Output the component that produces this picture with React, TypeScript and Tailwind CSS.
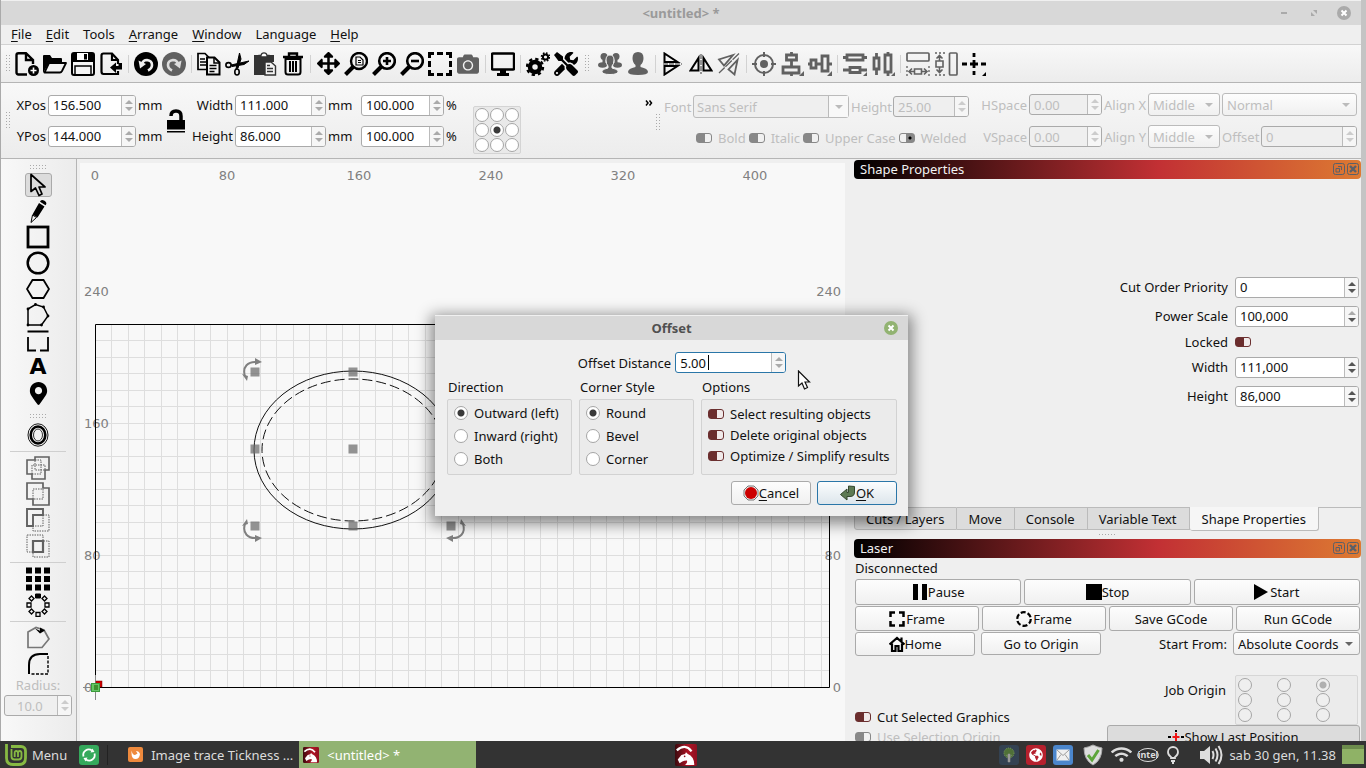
import type { ReactNode } from "react";
import clsx from "clsx";
import { FaArrowsAlt, FaCamera, FaGlobeAmericas, FaMapMarkerAlt, FaTools, FaWifi } from "react-icons/fa";

type ToolItem = { label: string; icon: ReactNode } | "separator" | "handle";

function Svg({ children, size = 24, color = "#000" }: { children: ReactNode; size?: number; color?: string }) {
  return (
    <svg width={size} height={size} viewBox="0 0 24 24" fill="none" stroke={color} strokeWidth={2} aria-hidden="true" className="shrink-0">
      {children}
    </svg>
  );
}

const GREY = "#616161";

const fileTools: ToolItem[] = [
  {
    label: "New",
    icon: (
      <Svg>
        <path d="M12 22.500H3.500Q1.500 22.500 1.500 20.500V3Q1.500 1.200 3.500 1.200H11L18 8v4M11 1v7h7" strokeWidth={2.400} />
        <circle cx="18.500" cy="18.500" r="5.500" fill="#000" stroke="none" />
        <path d="M18.500 15.500v6M15.500 18.500h6" stroke="#fff" strokeWidth={1.600} />
      </Svg>
    ),
  },
  {
    label: "Open",
    icon: (
      <Svg>
        <path d="M0 21V4q0-1 1-1h6l2 3h9q1 0 1 1v4H6z" fill="#000" stroke="none" />
        <path d="M1.500 20.500L6 11h17l-4 8q-.8 1.500-2 1.500z" fill="#f3f3f3" strokeWidth={1.800} strokeLinejoin="round" />
      </Svg>
    ),
  },
  {
    label: "Save",
    icon: (
      <Svg>
        <rect x="1" y="1" width="22" height="22" rx="2" fill="#f5f5f5" />
        <path d="M1 1h21v9H1z" fill="#000" stroke="none" />
        <path d="M6 1h11v7H6z" fill="#fff" stroke="none" />
        <path d="M14.500 2v5.500" strokeWidth={3} />
        <path d="M4 23v-9h16v9" strokeWidth={1.500} />
      </Svg>
    ),
  },
  {
    label: "Import",
    icon: (
      <Svg>
        <path d="M19 12V8l-6-6.500H4.500Q2.500 1.500 2.500 3.500v16q0 2.500 2 2.500H19v-3M13 2v6h6" strokeWidth={2.200} />
        <path d="M11 15.500l6-5V14h2.500v-3h3.500v6.500h-6v3.500z" fill="#000" stroke="none" />
      </Svg>
    ),
  },
  "separator",
  {
    label: "Undo",
    icon: (
      <Svg>
        <circle cx="12" cy="12" r="12" fill="#000" stroke="none" />
        <path d="M8 12q1-4 5-4 5 .5 5 5 0 3.500-4 5.500" stroke="#eee" strokeWidth={2.600} />
        <path d="M4.500 8.500L12 12l-6 4.500z" fill="#eee" stroke="none" />
      </Svg>
    ),
  },
  {
    label: "Redo",
    icon: (
      <Svg>
        <circle cx="12" cy="12" r="12" fill={GREY} stroke="none" />
        <path d="M16 12q-1-4-5-4-5 .5-5 5 0 3.500 4 5.500" stroke="#ddd" strokeWidth={2.600} />
        <path d="M19.500 8.500L12 12l6 4.500z" fill="#ddd" stroke="none" />
      </Svg>
    ),
  },
  "separator",
  {
    label: "Copy",
    icon: (
      <Svg>
        <path d="M1 1.500h7l4 4v12H1zM3 7h5M3 10h6M3 13h6" strokeWidth={1.700} />
        <path d="M10 5.500h7.500l5 5v12H10z" fill="#f3f3f3" />
        <path d="M17 6v5h5M12.500 13.500h7M12.500 16.500h7M12.500 19.500h5" strokeWidth={1.500} />
      </Svg>
    ),
  },
  {
    label: "Cut",
    icon: (
      <Svg>
        <ellipse cx="3.500" cy="13" rx="2.600" ry="2.400" strokeWidth={1.600} />
        <ellipse cx="12" cy="20" rx="2.200" ry="3" strokeWidth={1.600} />
        <path d="M11 17L14.500 1l1.500 6-3 9zM6 13l18-4-5 3.500-12 2z" fill="#000" strokeWidth={1} />
      </Svg>
    ),
  },
  {
    label: "Paste",
    icon: (
      <Svg color="#333">
        <path d="M1 3h20v7h-9v13H1z" fill="#333" stroke="none" />
        <path d="M6 5V3.500h2Q8.500.8 11 .8t3 2.700h2V5z" fill="#fff" strokeWidth={1.300} />
        <path d="M12 10h6l4.500 4v9H12z" fill="#f3f3f3" strokeWidth={1.400} />
        <path d="M14 13.500h3M14 16.500h6M14 19.500h6" strokeWidth={1.400} />
      </Svg>
    ),
  },
  {
    label: "Delete",
    icon: (
      <Svg>
        <path d="M2 5h20M8 4V1.500h8V4" strokeWidth={2.400} />
        <path d="M4.500 7v13q0 2.500 2.500 2.500h10q2.500 0 2.500-2.500V7zM9 9v11M12 9v11M15 9v11" />
      </Svg>
    ),
  },
  "separator",
  { label: "Pan", icon: <FaArrowsAlt size={23} /> },
  {
    label: "Zoom to page",
    icon: (
      <Svg>
        <circle cx="15" cy="9" r="8" strokeWidth={2.400} />
        <path d="M9 15L1.500 22.500" strokeWidth={4} />
        <path d="M12 5h4l3 3v5h-7zM14 8.500h3M14 10.500h3" strokeWidth={1.200} />
      </Svg>
    ),
  },
  {
    label: "Zoom in",
    icon: (
      <Svg>
        <circle cx="15" cy="9" r="7.800" strokeWidth={2.600} />
        <path d="M9 15L1.500 22.500" strokeWidth={4} />
        <path d="M15 5v8M11 9h8" strokeWidth={2.600} />
      </Svg>
    ),
  },
  {
    label: "Zoom out",
    icon: (
      <Svg>
        <circle cx="15" cy="9" r="7.800" strokeWidth={2.600} />
        <path d="M9 15L1.500 22.500" strokeWidth={4} />
        <path d="M11 9h8" strokeWidth={2.600} />
      </Svg>
    ),
  },
  {
    label: "Frame selection",
    icon: (
      <Svg>
        <path d="M1.500 6V1.500H6M9 1.500h6M18 1.500h4.500V6M22.500 9v6M22.500 18v4.500H18M15 22.500H9M6 22.500H1.500V18M1.500 15V9" strokeWidth={3} />
      </Svg>
    ),
  },
  { label: "Camera", icon: <FaCamera size={22} color={GREY} /> },
  "separator",
  {
    label: "Preview",
    icon: (
      <Svg>
        <rect x="1" y="1.500" width="22" height="16" rx="1" strokeWidth={2.400} />
        <path d="M9 18h6v3h3v3H6v-3h3z" fill="#000" stroke="none" />
      </Svg>
    ),
  },
  "separator",
  {
    label: "Settings",
    icon: (
      <Svg>
        <circle cx="9" cy="15" r="5" strokeWidth={4.500} />
        <circle cx="9" cy="15" r="8" strokeWidth={2.400} strokeDasharray="3.280 3" />
        <circle cx="19.500" cy="5" r="2.600" strokeWidth={2} />
        <circle cx="19.500" cy="5" r="4" strokeWidth={1.600} strokeDasharray="1.640 1.500" />
      </Svg>
    ),
  },
  { label: "Device settings", icon: <FaTools size={24} /> },
  "handle",
  {
    label: "Group",
    icon: (
      <Svg color={GREY}>
        <g fill={GREY} stroke="none">
          <circle cx="6" cy="4.500" r="3.500" />
          <circle cx="18" cy="4.500" r="3.500" />
          <ellipse cx="4.500" cy="13" rx="4.500" ry="2.800" />
          <ellipse cx="19.500" cy="13" rx="4.500" ry="2.800" />
          <path d="M4.500 6h3v6h-3zM16.500 6h3v6h-3z" />
        </g>
        <path d="M12 3q-4 0-4 5 0 4 2 6v2q-6 1-6 3.500 0 3 8 3t8-3q0-2.500-6-3.500v-2q2-2 2-6 0-5-4-5z" fill={GREY} stroke="#f3f3f3" strokeWidth={1} />
      </Svg>
    ),
  },
  {
    label: "Ungroup",
    icon: (
      <Svg>
        <path d="M12 0q-5.500 0-5.500 6 0 4.500 3 7v2Q2 16.500 2 20q0 3 10 3t10-3q0-3.500-7.500-5v-2q3-2.500 3-7 0-6-5.500-6z" fill={GREY} stroke="none" />
      </Svg>
    ),
  },
  "separator",
  {
    label: "Flip vertical",
    icon: (
      <Svg>
        <path d="M3.500 1.500v8.500h13zM3.500 22.500V14h13z" />
        <path d="M2 12h19" stroke="#777" strokeWidth={1.500} strokeDasharray="5 1" />
      </Svg>
    ),
  },
  {
    label: "Flip horizontal",
    icon: (
      <Svg>
        <path d="M9.500 6v12.500H1.500zM14.500 6v12.500h8z" />
        <path d="M12 2v20" stroke="#777" strokeWidth={1.500} strokeDasharray="5 1" />
      </Svg>
    ),
  },
  {
    label: "Mirror across line",
    icon: (
      <Svg color={GREY}>
        <path d="M16 3L2 7.500l5 6zM20.500 8l-3 14.500-6-5z" strokeWidth={1.800} />
        <path d="M22 1.500L2 21" strokeWidth={1.300} strokeDasharray="9 1" />
      </Svg>
    ),
  },
  "separator",
  {
    label: "Move to center",
    icon: (
      <Svg color={GREY}>
        <circle cx="12" cy="12" r="9" />
        <circle cx="12" cy="12" r="4" fill={GREY} stroke="none" />
        <path d="M12 0v5M12 19v5M0 12h5M19 12h5" />
      </Svg>
    ),
  },
  {
    label: "Align vertical centers",
    icon: (
      <Svg color={GREY}>
        <path d="M6.500 3h10v5h-10zM3 15h16v6H3zM11.500 0v3M11.500 8v7M11.500 21v3" strokeWidth={2.800} />
        <path d="M24 19v5h-5z" fill={GREY} stroke="none" />
      </Svg>
    ),
  },
  {
    label: "Align horizontal centers",
    icon: (
      <Svg color={GREY}>
        <path d="M3 8h5v8H3zM14 4h6v15h-6zM0 12h3M8 12h6M20 12h4" strokeWidth={2.800} />
        <path d="M24 19v5h-5z" fill={GREY} stroke="none" />
      </Svg>
    ),
  },
  "separator",
  {
    label: "Distribute vertically",
    icon: (
      <Svg color={GREY}>
        <path d="M4 3h16v5H4zM7 15.500h10v5H7zM0 5.500h4M20 5.500h4M0 18h7M17 18h7" strokeWidth={2.800} />
        <path d="M24 20v4h-4z" fill={GREY} stroke="none" />
      </Svg>
    ),
  },
  {
    label: "Distribute horizontally",
    icon: (
      <Svg color={GREY}>
        <path d="M3 6h5v11H3zM14 3h6v17h-6zM5.500 1v5M5.500 17v6M17 0v3M17 20v4" strokeWidth={2.800} />
        <path d="M24 20v4h-4z" fill={GREY} stroke="none" />
      </Svg>
    ),
  },
  "separator",
  {
    label: "Space horizontally",
    icon: (
      <Svg color={GREY}>
        <rect x="1" y="1" width="22" height="8" rx="1" strokeWidth={1.700} />
        <path d="M8.500 17h7v5h-7zM3.500 19.500h5M15.500 19.500h5M6 16.500l-3 3 3 3M18 16.500l3 3-3 3" strokeWidth={1.600} />
        <path d="M1 14v10M23 14v10" strokeWidth={1.300} strokeDasharray="2 2" />
      </Svg>
    ),
  },
  {
    label: "Space vertically",
    icon: (
      <Svg color={GREY}>
        <rect x="15.500" y="1" width="7.500" height="22" rx="1" strokeWidth={1.700} />
        <path d="M2 9h7v6H2zM5.500 9V4M5.500 15v5M2.500 6.500l3-3 3 3M2.500 17.500l3 3 3-3" strokeWidth={1.600} />
        <path d="M1 1h10M1 23h10" strokeWidth={1.300} strokeDasharray="2 2" />
      </Svg>
    ),
  },
  {
    label: "Set position",
    icon: (
      <Svg>
        <path d="M0 12h5M8 12h8M19 12h5M12 1v4M12 8v8M12 19v4" strokeWidth={2.800} />
        <path d="M24 20v4h-4z" fill="#000" stroke="none" />
      </Svg>
    ),
  },
];

const drawTools: ToolItem[] = [
  {
    label: "Select",
    icon: (
      <Svg>
        <path d="M5 1.500v17l4.500-3.500 3.500 7.500 3-1.500-3-7h6z" strokeWidth={1.700} strokeLinejoin="round" />
      </Svg>
    ),
  },
  {
    label: "Draw lines",
    icon: (
      <Svg>
        <path d="M13 4l5.500 3.500-7 11-5-3zM14 2.800q1-3 4.500-1 3.200 1.800 1 4.500z" fill="#000" stroke="none" />
        <path d="M6.500 16l4 2.500-5.500 5z" strokeWidth={1} />
      </Svg>
    ),
  },
  {
    label: "Rectangle",
    icon: (
      <Svg>
        <rect x="2" y="2" width="20" height="20" strokeWidth={2.800} />
      </Svg>
    ),
  },
  {
    label: "Ellipse",
    icon: (
      <Svg>
        <circle cx="12" cy="12" r="10.300" strokeWidth={2.500} />
      </Svg>
    ),
  },
  {
    label: "Polygon",
    icon: (
      <Svg>
        <path d="M6.500 3h11L23 12l-5.500 9h-11L1 12z" strokeWidth={1.800} />
      </Svg>
    ),
  },
  {
    label: "Edit nodes",
    icon: (
      <Svg>
        <path d="M2 6l7.500-4.500 8 2.500L22 13l-6.500 9H2z" strokeWidth={1.500} />
        <path d="M2 6h0M9.500 1.500h0M17.500 4h0M22 13h0M15.500 22h0M2 22h0" strokeWidth={2.800} strokeLinecap="round" />
      </Svg>
    ),
  },
  {
    label: "Tabs",
    icon: (
      <Svg>
        <path d="M1.500 2.500h21M2 8v13.500h8M14 21.500h8V8" strokeWidth={1.800} />
      </Svg>
    ),
  },
  { label: "Text", icon: <span className="font-['DejaVu_Sans',sans-serif] text-[22px] leading-6 font-bold text-black">A</span> },
  { label: "Position laser", icon: <FaMapMarkerAlt size={23} color="#000" /> },
  "handle",
  {
    label: "Offset shapes",
    icon: (
      <Svg>
        <ellipse cx="12" cy="12" rx="10" ry="11.200" strokeWidth={0.900} />
        <ellipse cx="12" cy="12" rx="7.300" ry="8.500" strokeWidth={2.600} />
        <ellipse cx="12" cy="12" rx="4.500" ry="6" strokeWidth={0.800} />
      </Svg>
    ),
  },
  "separator",
  {
    label: "Weld",
    icon: (
      <Svg color={GREY}>
        <path d="M9 1h14v13h-4v9H6v-5H1V4h8z" strokeWidth={1.600} />
        <path d="M9 4h6v14H6M6 18V9h13v5H9V4" strokeWidth={1} strokeDasharray="1.500 1" />
      </Svg>
    ),
  },
  {
    label: "Boolean union",
    icon: (
      <Svg color={GREY}>
        <path d="M1 1h16v5h6v17H7v-6H1z" strokeWidth={1.700} />
        <path d="M7 17V7h10v10z" strokeWidth={1} strokeDasharray="1.500 1" />
      </Svg>
    ),
  },
  {
    label: "Boolean subtract",
    icon: (
      <Svg color={GREY}>
        <path d="M1 1h16v6H7v11H1z" strokeWidth={1.900} />
        <path d="M17 7h6v16H7v-5h10z" strokeWidth={1} strokeDasharray="1.500 1" />
      </Svg>
    ),
  },
  {
    label: "Boolean intersection",
    icon: (
      <Svg color={GREY}>
        <path d="M1 1h16v6h6v16H7v-5H1z" strokeWidth={1} strokeDasharray="1.500 1" />
        <path d="M7 7h10v11H7z" strokeWidth={2.200} />
      </Svg>
    ),
  },
  "separator",
  {
    label: "Grid array",
    icon: (
      <Svg>
        <path d="M0 3.500h24M0 12h24M0 20.500h24" strokeWidth={6} strokeDasharray="6 3" />
      </Svg>
    ),
  },
  {
    label: "Circular array",
    icon: (
      <Svg>
        <path d="M9.500 1h5v4h-5z" fill="#000" strokeWidth={1} />
        <path
          d="M10 19.500h4v4h-4zM1 10h4v4H1zM19 10h4v4h-4zM5.500 3l2.500 2.500L5.500 8 3 5.500zM18.500 3L21 5.500 18.500 8 16 5.500zM5.500 16L8 18.500 5.500 21 3 18.500zM18.500 16l2.500 2.500-2.500 2.500-2.500-2.500z"
          strokeWidth={1.300}
        />
      </Svg>
    ),
  },
  "separator",
  {
    label: "Optimize shapes",
    icon: (
      <Svg color="#777">
        <path d="M2 6l8-4.500 8 2.500 5 9-7 8.500H2z" strokeWidth={1.700} />
        <path d="M9 2.500l5 2.200V1.500l5 3-5 3" fill="#000" stroke="none" />
      </Svg>
    ),
  },
  {
    label: "Radius tool",
    icon: (
      <Svg>
        <path d="M3 22v-9Q3 2 14 2h8" />
        <path d="M22 4v18H4" strokeWidth={1.400} strokeDasharray="3 1.500" />
      </Svg>
    ),
  },
];

function Dots({ vertical = false }: { vertical?: boolean }) {
  const long = [0, 3, 6, 9, 12, 15];
  return (
    <svg width={vertical ? 6 : 18} height={vertical ? 18 : 5} fill="#aaa" shapeRendering="crispEdges" aria-hidden="true" className="shrink-0">
      {long.map((a) => [0, 3].map((b) => <rect key={`${a}-${b}`} x={vertical ? b : a} y={vertical ? a : b} width="1" height="1" />))}
    </svg>
  );
}

function Spin({ id, value, className, label, disabled, focused, upOff, light }: {
  id: string;
  value: string;
  className: string;
  label?: string;
  disabled?: boolean;
  focused?: boolean;
  upOff?: boolean;
  light?: boolean;
}) {
  const color = disabled ? "#ccc" : light ? "#aaa" : "#555";
  return (
    <div
      className={clsx(
        "flex h-[21px] overflow-hidden rounded-[3px] border",
        focused ? "border-[#2a76a8]" : "border-[#aaa]",
        disabled ? "bg-[#efefef]" : "bg-white",
        className
      )}
    >
      <input
        id={id}
        aria-label={label}
        defaultValue={value}
        disabled={disabled}
        className={clsx("min-w-0 flex-1 bg-transparent px-1 leading-4 outline-none", disabled && "text-[#bebebe]")}
      />
      <div className="flex w-[14px] flex-col items-center justify-center gap-[3px] border-l border-[#bbb] bg-[#f6f6f6]">
        <button type="button" disabled={disabled} aria-label="Increase">
          <svg width="8" height="4" className="block">
            <path d="M0 4h8L4 0z" fill={upOff ? "#aaa" : color} />
          </svg>
        </button>
        <button type="button" disabled={disabled} aria-label="Decrease">
          <svg width="8" height="4" className="block">
            <path d="M0 0h8L4 4z" fill={color} />
          </svg>
        </button>
      </div>
    </div>
  );
}

function Select({ id, value, className, disabled, split }: { id: string; value: string; className: string; disabled?: boolean; split?: boolean }) {
  return (
    <div className={clsx("relative", className)}>
      <select
        id={id}
        disabled={disabled}
        className={clsx(
          "block h-[23px] w-full appearance-none rounded-[3px] border opacity-100 outline-none",
          disabled ? "border-[#bbb] text-[#bebebe]" : "border-[#aaa]",
          split ? "bg-[#efefef] px-[3px]" : "bg-linear-to-b from-[#fdfdfd] to-[#f0f0f0] px-1"
        )}
      >
        <option>{value}</option>
      </select>
      <span className={clsx("pointer-events-none absolute inset-y-px right-px flex w-[20px] items-center justify-center", split && "border-l border-[#bbb] bg-[#f8f8f8]")}>
        <svg width="8" height="4">
          <path d="M0 0h8L4 4z" fill={disabled ? "#bbb" : "#666"} />
        </svg>
      </span>
    </div>
  );
}

function Toggle({ id, label, disabled, on }: { id: string; label: string; disabled?: boolean; on?: boolean }) {
  return (
    <div className="flex items-center gap-[6px]">
      <input
        id={id}
        type="checkbox"
        defaultChecked={on}
        disabled={disabled}
        className={clsx(
          "h-[10px] w-4 shrink-0 appearance-none rounded-[3px] border",
          disabled ? "border-[#888]" : "border-[#6b3030] bg-[linear-gradient(90deg,#6b2d2d_8px,#f1eaea_8px)]",
          disabled && !on && "bg-[linear-gradient(90deg,#888_8px,#f1f1f1_8px)]",
          disabled && on && "bg-[radial-gradient(circle_at_10px_4px,#000_1px,#888_2px,#888_4px,transparent_4px),linear-gradient(90deg,#f1f1f1_6px,#888_6px)]"
        )}
      />
      {label ? (
        <label htmlFor={id} className={clsx("whitespace-nowrap", disabled && "text-[#bebebe]")}>
          {label}
        </label>
      ) : null}
    </div>
  );
}

function Radio({ name, on, disabled, label, id }: { name: string; on?: boolean; disabled?: boolean; label?: string; id?: string }) {
  return (
    <input
      type="radio"
      id={id}
      name={name}
      defaultChecked={on}
      disabled={disabled}
      aria-label={label}
      className={clsx(
        "size-[14px] shrink-0 appearance-none rounded-full border border-[#a5a5a5]",
        disabled
          ? "bg-[#efefef] checked:bg-[radial-gradient(circle,#b0b0b0_3px,#efefef_4px)]"
          : "bg-white checked:bg-[radial-gradient(circle,#3a3a3a_3px,#fff_4px)]"
      )}
    />
  );
}

function DockHeader({ title }: { title: string }) {
  return (
    <div className="flex h-[19px] shrink-0 items-center gap-[2px] rounded bg-[linear-gradient(90deg,#000,#c23034_60%,#dd7a32)] pr-[2px] pb-px pl-[6px] text-[#f2f2f2]">
      <h2 className="flex-1">{title}</h2>
      <button type="button" aria-label={`Float ${title}`}>
        <svg width="12" height="12" fill="none" stroke="#5b6068" className="block">
          <rect x="0.500" y="0.500" width="11" height="11" rx="2" />
          <path d="M5 3.500h3.500V7M3 5.500h3.500V9H3z" />
        </svg>
      </button>
      <button type="button" aria-label={`Close ${title}`}>
        <svg width="12" height="12" fill="none" stroke="#5b6068" className="block">
          <rect x="0.500" y="0.500" width="11" height="11" rx="2" />
          <path d="M3 3l6 6M9 3L3 9" strokeWidth="2.400" />
        </svg>
      </button>
    </div>
  );
}

function PushButton({ children, className }: { children: ReactNode; className?: string }) {
  return (
    <button
      type="button"
      className={clsx("flex items-center justify-center rounded-[3px] border border-[#aaa] bg-linear-to-b from-[#fdfdfd] to-[#f0f0f0] whitespace-nowrap", className)}
    >
      {children}
    </button>
  );
}

function TitleBar() {
  return (
    <header className="flex h-[25px] shrink-0 items-center border-t border-[#f0f0f0] bg-[#d8d8d8] pr-[10px] pl-[84px] text-[#9a9a9a]">
      <h1 className="flex-1 text-center font-bold">&lt;untitled&gt; *</h1>
      <div className="flex items-center gap-4 pb-px">
        <button type="button" aria-label="Minimize" className="flex w-[14px] justify-center">
          <svg width="8" height="8">
            <path d="M1 4h6" stroke="#aaa" strokeWidth="2" />
          </svg>
        </button>
        <button type="button" aria-label="Restore" className="flex w-[14px] justify-center">
          <svg width="8" height="8" fill="#aaa">
            <path d="M3 1h4v4zM1 3v4h4z" />
          </svg>
        </button>
        <button type="button" aria-label="Close window">
          <svg width="14" height="14" className="block">
            <circle cx="7" cy="7" r="7" fill="#aaa" />
            <path d="M4.500 4.500l5 5M9.500 4.500l-5 5" stroke="#fff" strokeWidth="2" />
          </svg>
        </button>
      </div>
    </header>
  );
}

const menus = ["File", "Edit", "_Tools", "Arrange", "Window", "_Language", "Help"];

function MenuBar() {
  return (
    <nav className="flex h-5 shrink-0 items-center gap-[14px] border-b border-[#d2d2d2] pb-px pl-[10px]">
      {menus.map((menu) =>
        menu.startsWith("_") ? (
          <button type="button" key={menu}>
            {menu.slice(1)}
          </button>
        ) : (
          <button type="button" key={menu}>
            <span className="underline underline-offset-2">{menu[0]}</span>
            {menu.slice(1)}
          </button>
        )
      )}
    </nav>
  );
}

function MainToolbar() {
  return (
    <div role="toolbar" aria-label="Main" className="flex h-[38px] shrink-0 items-center gap-1 border-b border-[#b5b5b5] bg-linear-to-b from-[#f8f8f8] to-[#ececec] pl-[5px]">
      <div className="-mr-1 w-[9px]">
        <Dots vertical />
      </div>
      {fileTools.map((tool, i) => {
        if (tool === "separator") return <div key={i} className="mx-px h-[18px] w-px bg-[#d2d2d2]" />;
        if (tool === "handle")
          return (
            <div key={i} className="flex w-3 justify-center">
              <Dots vertical />
            </div>
          );
        return (
          <button key={tool.label} type="button" aria-label={tool.label} className="flex size-6 shrink-0 items-center justify-center text-black">
            {tool.icon}
          </button>
        );
      })}
    </div>
  );
}

const anchors = ["Top left", "Top", "Top right", "Left", "Center", "Right", "Bottom left", "Bottom", "Bottom right"];

function NumericToolbar() {
  const label = "text-right whitespace-nowrap";
  return (
    <div className="flex h-[76px] shrink-0 items-center border-b border-[#b5b5b5] bg-linear-to-b from-[#f8f8f8] to-[#ececec] pr-1 pl-[5px]">
      <Dots vertical />
      <div className="grid grid-cols-[34px_88px_23px] items-center gap-x-[2px] gap-y-[10px]">
        <label htmlFor="xpos" className={label}>XPos</label>
        <Spin id="xpos" value="156.500" className="w-full" light />
        <span>mm</span>
        <label htmlFor="ypos" className={label}>YPos</label>
        <Spin id="ypos" value="144.000" className="w-full" light />
        <span>mm</span>
      </div>
      <button type="button" aria-label="Lock aspect ratio" className="mx-[5px]">
        <svg width="20" height="24" className="block">
          <path d="M5 7q0-5 5-5t5 5v4" fill="none" stroke="#000" strokeWidth="3.500" />
          <path d="M1 11h18v9.500H1zM1 22h18v1.500H1z" />
        </svg>
      </button>
      <div className="grid grid-cols-[42px_91px_31px_83px_14px] items-center gap-x-[2px] gap-y-[10px]">
        <label htmlFor="tb-width" className={label}>Width</label>
        <Spin id="tb-width" value="111.000" className="w-full" light />
        <span>mm</span>
        <Spin id="width-pct" label="Width percent" value="100.000" className="w-full" light />
        <span>%</span>
        <label htmlFor="tb-height" className={label}>Height</label>
        <Spin id="tb-height" value="86.000" className="w-full" light />
        <span>mm</span>
        <Spin id="height-pct" label="Height percent" value="100.000" className="w-full" light />
        <span>%</span>
      </div>
      <div className="mt-[19px] ml-[13px] grid grid-cols-3 gap-px rounded-xs border border-[#d4d4d4] bg-[#e9e9e9] p-px">
        {anchors.map((anchor) => (
          <Radio key={anchor} name="anchor" label={anchor} on={anchor === "Center"} />
        ))}
      </div>
      <div className="mb-4 ml-auto flex">
        <button type="button" aria-label="More">
          <svg width="8" height="6" className="mb-5 block" fill="none" stroke="#000" strokeWidth="1.500">
            <path d="M1 0.500l2 2.500-2 2.500M4.500 0.500l2 2.500-2 2.500" />
          </svg>
        </button>
      </div>
      <div className="mt-1 mr-[2px] ml-[3px]">
        <Dots vertical />
      </div>
      <div className="flex w-[307px] flex-col gap-3 text-[#bebebe]">
        <div className="flex items-center">
          <label htmlFor="font" className="w-[29px]">Font</label>
          <Select id="font" value="Sans Serif" className="w-[156px]" disabled split />
          <label htmlFor="font-height" className="w-11 pl-[2px]">Height</label>
          <Spin id="font-height" value="25.00" className="w-[76px]" disabled />
        </div>
        <div className="flex items-center gap-[3px] pl-8">
          <Toggle id="bold" label="Bold" disabled />
          <Toggle id="italic" label="Italic" disabled />
          <Toggle id="upper" label="Upper Case" disabled />
          <Toggle id="welded" label="Welded" disabled on />
        </div>
      </div>
      <div className="ml-[10px] grid grid-cols-[46px_73px_42px_72px_135px] items-center gap-x-[2px] gap-y-[9px] text-[#bebebe]">
        <label htmlFor="hspace" className={label}>HSpace</label>
        <Spin id="hspace" value="0.00" className="w-full" disabled />
        <label htmlFor="align-x" className={label}>Align X</label>
        <Select id="align-x" value="Middle" className="w-full" disabled />
        <Select id="mode" value="Normal" className="w-full" disabled />
        <label htmlFor="vspace" className={label}>VSpace</label>
        <Spin id="vspace" value="0.00" className="w-full" disabled />
        <label htmlFor="align-y" className={label}>Align Y</label>
        <Select id="align-y" value="Middle" className="w-full" disabled />
        <div className="flex items-center">
          <label htmlFor="text-offset" className="w-[39px]">Offset</label>
          <Spin id="text-offset" value="0" className="flex-1" disabled />
        </div>
      </div>
    </div>
  );
}

function DrawToolbar() {
  return (
    <div role="toolbar" aria-label="Drawing" className="flex w-[76px] shrink-0 flex-col items-center gap-[2px] overflow-hidden border-r border-[#b5b5b5] bg-linear-to-r from-[#f8f8f8] to-[#ececec] pt-1 pr-px">
      <div className="flex h-2 shrink-0 items-center pl-[2px]">
        <Dots />
      </div>
      {drawTools.map((tool, i) => {
        if (tool === "separator")
          return (
            <div key={i} className="flex h-[5px] w-14 shrink-0 items-center">
              <div className="h-px w-full bg-[#cfcfcf]" />
            </div>
          );
        if (tool === "handle")
          return (
            <div key={i} className="flex h-[14px] shrink-0 items-end pb-[2px] pl-[2px]">
              <Dots />
            </div>
          );
        return (
          <button
            key={tool.label}
            type="button"
            aria-label={tool.label}
            className={clsx("flex h-6 w-[27px] shrink-0 items-center justify-center", tool.label === "Select" && "rounded-[3px] border border-[#aaa] bg-[#dcdcdc]")}
          >
            {tool.icon}
          </button>
        );
      })}
      <label htmlFor="radius" className="leading-[15px] text-[#bebebe]">Radius:</label>
      <Spin id="radius" value="10.0" className="w-[68px] pl-2" disabled />
    </div>
  );
}

const STEP = 16.5;
const xLabels = [0, 80, 160, 240, 320, 400];
const leftLabels = [240, 160, 80, 0];
const rightLabels = [240, 80, 0];

function RotateHandle({ transform }: { transform?: string }) {
  return (
    <g transform={transform}>
      <path d="M245 376C242 367 248 361 257 362" fill="none" stroke="#808080" strokeWidth="2" />
      <path d="M255 358l7 4-7 3zM242 374l6 2-1 5z" fill="#808080" />
    </g>
  );
}

function Canvas() {
  return (
    <main className="mt-1 ml-[3px] min-w-0 flex-1 bg-[#f8f8f8]">
      <svg viewBox="80 163 765 578" preserveAspectRatio="xMinYMin slice" className="block h-full w-full text-[13px]" role="img" aria-label="Workspace">
        <g stroke="#dedede" strokeWidth="1" shapeRendering="crispEdges">
          {Array.from({ length: 44 }, (_, i) => (
            <path key={`v${i}`} d={`M${95 + (i + 1) * STEP} 325V687`} />
          ))}
          {Array.from({ length: 21 }, (_, i) => (
            <path key={`h${i}`} d={`M96 ${687 - (i + 1) * STEP}H829`} />
          ))}
        </g>
        <g fill="#808080" fontFamily="DejaVu Sans, sans-serif">
          {xLabels.map((n) => (
            <text key={n} x={95 + (n / 10) * STEP} y="180" textAnchor="middle">{n}</text>
          ))}
          {leftLabels.map((n) => (
            <text key={n} x="84" y={692 - (n / 10) * STEP}>{n}</text>
          ))}
          {rightLabels.map((n) => (
            <text key={n} x="841" y={692 - (n / 10) * STEP} textAnchor="end">{n}</text>
          ))}
        </g>
        <path d="M95.500 324.500H829.500V687.500H95.500z" fill="none" stroke="#000" />
        <ellipse cx="353" cy="450" rx="99" ry="79" fill="none" stroke="#111" />
        <ellipse cx="353" cy="450" rx="91" ry="71" fill="none" stroke="#111" strokeDasharray="10 4" />
        <g fill="#666" fillOpacity="0.700">
          {[[255, 372], [353, 372], [255, 449], [353, 449], [255, 526], [353, 526], [451, 526]].map(([x, y]) => (
            <rect key={`${x}-${y}`} x={x - 4.500} y={y - 4.500} width="9" height="9" />
          ))}
        </g>
        <RotateHandle />
        <RotateHandle transform="matrix(1 0 0 -1 0 900)" />
        <RotateHandle transform="matrix(-1 0 0 -1 708 900)" />
        <path d="M83 687.500h8M95.500 675v25" stroke="#888" />
        <rect x="96" y="681" width="6" height="6" fill="#c00" stroke="#700" strokeWidth="0.500" />
        <rect x="91.500" y="683.500" width="8" height="8" fill="#66c566" stroke="#3b9a3b" />
        <rect x="94" y="685" width="4" height="5" fill="#3f8f2f" />
      </svg>
    </main>
  );
}

const tabs = ["Cuts / Layers", "Move", "Console", "Variable Text"];

function ShapeProperties() {
  return (
    <section className="flex min-h-0 flex-1 flex-col pt-px">
      <DockHeader title="Shape Properties" />
      <div className="flex min-h-0 flex-1 flex-col justify-center pb-[3px]">
        <div className="ml-auto grid grid-cols-[auto_124px] items-center gap-x-[7px] gap-y-2 pr-[2px] text-right">
          <label htmlFor="priority">Cut Order Priority</label>
          <Spin id="priority" value="0" className="w-full" />
          <label htmlFor="power">Power Scale</label>
          <Spin id="power" value="100,000" className="w-full" upOff />
          <label htmlFor="locked" className="leading-[14px]">Locked</label>
          <Toggle id="locked" label="" />
          <label htmlFor="sp-width">Width</label>
          <Spin id="sp-width" value="111,000" className="w-full" />
          <label htmlFor="sp-height">Height</label>
          <Spin id="sp-height" value="86,000" className="w-full" />
        </div>
      </div>
      <div role="tablist" className="flex h-6 shrink-0 items-start">
        {tabs.map((tab) => (
          <button key={tab} type="button" role="tab" aria-selected="false" className="h-[23px] border border-l-0 border-[#bbb] bg-[#dcdcdc] pr-3 pl-[11px] whitespace-nowrap first:rounded-bl-[3px] first:border-l">
            {tab}
          </button>
        ))}
        <button type="button" role="tab" aria-selected="true" className="h-6 rounded-b-[3px] border border-t-0 border-l-0 border-[#bbb] bg-[#f6f6f6] px-3 whitespace-nowrap">
          Shape Properties
        </button>
        <div className="flex-1 border-t border-[#bbb]" />
      </div>
    </section>
  );
}

function LaserPanel() {
  return (
    <section className="flex h-[210px] shrink-0 flex-col overflow-hidden">
      <div className="flex h-2 shrink-0 items-center justify-center">
        <svg width="18" height="2" fill="#aaa" shapeRendering="crispEdges">
          {[0, 3, 6, 9, 12, 15].map((x) => <rect key={x} x={x} y="0" width="1" height="1" />)}
        </svg>
      </div>
      <DockHeader title="Laser" />
      <div className="shrink-0 px-px">
        <p className="h-5 leading-5">Disconnected</p>
        <div className="mt-px grid grid-cols-3 gap-[3px]">
          <PushButton className="h-[26px]">
            <svg width="16" height="16"><path d="M1 0h5v16H1zM10 0h5v16h-5z" /></svg>
            Pause
          </PushButton>
          <PushButton className="h-[26px]">
            <svg width="16" height="16"><path d="M0 0h16v16H0z" /></svg>
            Stop
          </PushButton>
          <PushButton className="h-[26px]">
            <svg width="16" height="16"><path d="M0 0l14 8-14 8z" /></svg>
            Start
          </PushButton>
        </div>
        <div className="mt-px grid grid-cols-4 gap-[3px]">
          <PushButton className="h-[25px]">
            <svg width="17" height="16" fill="none" stroke="#000" strokeWidth="2.500"><path d="M1.500 6V1.500H6M10 1.500h4.500V6M14.500 10v4.500H10M6 14.500H1.500V10" /></svg>
            Frame
          </PushButton>
          <PushButton className="h-[25px]">
            <svg width="17" height="16" fill="none" stroke="#000" strokeWidth="2.200"><circle cx="8" cy="8" r="6.800" strokeDasharray="5 2.120" /></svg>
            Frame
          </PushButton>
          <PushButton className="h-[25px]">Save GCode</PushButton>
          <PushButton className="h-[25px]">Run GCode</PushButton>
        </div>
        <div className="mt-px flex items-start gap-[6px]">
          <PushButton className="h-[24px] w-[120px]">
            <svg width="16" height="16" fill="none" stroke="#000" strokeWidth="2.200"><path d="M0.500 8.500L8 2l7.500 6.500M3 7.500v7.500h3.500v-5h3v5H13V7.500M12.500 1.500V5" /></svg>
            Home
          </PushButton>
          <PushButton className="h-[23px] w-[120px]">Go to Origin</PushButton>
          <label htmlFor="start-from" className="ml-auto leading-6">Start From:</label>
          <Select id="start-from" value="Absolute Coords" className="w-[127px]" />
        </div>
        <div className="mt-[19px] flex items-center justify-end gap-[9px] pr-[2px]">
          <span className="pb-5 leading-3">Job Origin</span>
          <div className="grid w-[123px] grid-cols-3 gap-y-px rounded-xs border border-[#d6d6d6] bg-[#ebebeb] px-[2px] py-[2px]">
            {anchors.map((anchor) => (
              <Radio key={anchor} name="job-origin" label={`Job origin ${anchor}`} on={anchor === "Top right"} disabled />
            ))}
          </div>
        </div>
        <div className="-mt-4 flex items-start justify-between">
          <div className="flex flex-col gap-1">
            <Toggle id="cut-selected" label="Cut Selected Graphics" />
            <Toggle id="selection-origin" label="Use Selection Origin" disabled />
          </div>
          <button type="button" className="mt-4 flex h-6 w-[253px] items-center justify-center rounded-[3px] border border-[#aaa] bg-[#dcdcdc]">
            <svg width="16" height="16">
              <path d="M0 8h3M13 8h3M8 1v2M8 13v2" stroke="#000" strokeWidth="2" />
              <path d="M8 4v8M4.500 8h7" stroke="#e11" strokeWidth="2" />
            </svg>
            Show Last Position
          </button>
        </div>
      </div>
    </section>
  );
}

const directions = ["Outward (left)", "Inward (right)", "Both"];
const corners = ["Round", "Bevel", "Corner"];
const options = ["Select resulting objects", "Delete original objects", "Optimize / Simplify results"];

function RadioGroup({ title, name, items, className }: { title: string; name: string; items: string[]; className: string }) {
  return (
    <div role="radiogroup" aria-label={title} className={className}>
      <h3 className="pl-px leading-4">{title}</h3>
      <div className="mt-1 flex h-[76px] flex-col gap-[7px] rounded-xs border border-[#d2d2d2] bg-[#ebebeb] px-[6px] pt-[5px]">
        {items.map((item, i) => (
          <div key={item} className="flex items-center gap-[6px]">
            <Radio name={name} id={`${name}-${i}`} on={i === 0} />
            <label htmlFor={`${name}-${i}`} className="leading-4 whitespace-nowrap">{item}</label>
          </div>
        ))}
      </div>
    </div>
  );
}

function OffsetDialog() {
  return (
    <div role="dialog" aria-label="Offset" className="absolute top-[315px] left-[435px] flex h-[201px] w-[473px] flex-col bg-[#efefef] shadow-[0_4px_14px_4px_rgba(0,0,0,0.45)]">
      <div className="flex h-[25px] shrink-0 items-center border-t border-[#f0f0f0] bg-[#d8d8d8] pr-[10px] pl-6">
        <h2 className="flex-1 text-center font-bold text-[#505050]">Offset</h2>
        <button type="button" aria-label="Close dialog" className="pb-px">
          <svg width="14" height="14" className="block">
            <circle cx="7" cy="7" r="7" fill="#92b372" />
            <path d="M4.500 4.500l5 5M9.500 4.500l-5 5" stroke="#fff" strokeWidth="2" />
          </svg>
        </button>
      </div>
      <div className="flex flex-1 flex-col pt-3 pr-[11px] pl-3">
        <div className="flex items-center justify-center gap-1 pl-5">
          <label htmlFor="offset-distance">Offset Distance</label>
          <div className="relative">
            <Spin id="offset-distance" value="5.00" className="w-[111px]" focused light />
            <span className="absolute top-[3px] left-[33px] h-[15px] w-px bg-black" />
          </div>
        </div>
        <div className="mt-[6px] flex gap-[7px]">
          <RadioGroup title="Direction" name="direction" items={directions} className="w-[125px]" />
          <RadioGroup title="Corner Style" name="corner" items={corners} className="w-[115px]" />
          <div role="group" aria-label="Options" className="w-[196px]">
            <h3 className="pl-px leading-4">Options</h3>
            <div className="mt-1 flex h-[76px] flex-col gap-[5px] rounded-xs border border-[#d2d2d2] bg-[#ebebeb] px-[6px] pt-[6px] leading-4">
              {options.map((option, i) => (
                <Toggle key={option} id={`option-${i}`} label={option} />
              ))}
            </div>
          </div>
        </div>
        <div className="mt-[6px] flex justify-end gap-[6px]">
          <PushButton className="h-6 w-20">
            <svg width="16" height="16">
              <path d="M5 1h6l4 4v6l-4 4H5l-4-4V5z" fill="#eee" stroke="#777" />
              <circle cx="8" cy="8" r="6" fill="#c00" />
            </svg>
            <span><span className="underline underline-offset-2">C</span>ancel</span>
          </PushButton>
          <button type="button" className="flex h-6 w-20 items-center justify-center rounded-[3px] border border-[#2a76a8] bg-linear-to-b from-[#fbfdfe] to-[#dde6ec]">
            <svg width="16" height="16">
              <path d="M8.500 1l6 .5V7q0 4.500-4.500 4.500H7V15L0.500 9.500 7 4v3.500h1.500z" fill="#5d7a53" stroke="#34472e" />
            </svg>
            <span><span className="underline underline-offset-2">O</span>K</span>
          </button>
        </div>
      </div>
    </div>
  );
}

function DragonLogo({ size }: { size: number }) {
  return (
    <svg width={size} height={size} viewBox="0 0 24 24" className="shrink-0" aria-hidden="true">
      <defs>
        <linearGradient id="ember">
          <stop offset="0" stopColor="#3a0a0e" />
          <stop offset="0.600" stopColor="#b01425" />
          <stop offset="1" stopColor="#8f1020" />
        </linearGradient>
      </defs>
      <rect width="24" height="24" rx="2" fill="url(#ember)" />
      <path d="M2 7Q11-1 18 8" fill="none" stroke="#fff" strokeWidth="2.500" />
      <path d="M3 17l4-5 4-1 1-2 2 2q7 3 7 12H11q3-3 2-5-3 0-5 1l-3 2z" fill="#fff" />
      <circle cx="10.500" cy="13.500" r="0.900" fill="#8f1020" />
    </svg>
  );
}

function Taskbar() {
  return (
    <footer className="flex h-[27px] shrink-0 items-center bg-[#333] text-[#dcdcdc]">
      <button type="button" className="flex h-full items-center gap-[5px] pl-[5px]">
        <svg width="22" height="22" viewBox="0 0 22 22" fill="none" stroke="#87b943" aria-hidden="true">
          <path d="M1.500 0v14q0 6.500 6.500 6.500h6q6.500 0 6.500-6.500V7q0-4.500-4.500-4.500H6" strokeWidth="2.800" />
          <path d="M6.500 5v7.500q0 3 3 3h4q3 0 3-3V9q0-2-1.700-2T13 9v4M13 9q0-2-1.700-2T9.700 9v4" strokeWidth="1.800" />
        </svg>
        Menu
      </button>
      <button type="button" aria-label="Update manager" className="ml-3 flex size-5 items-center justify-center rounded-[3px] bg-[#35a95c]">
        <svg width="16" height="16" fill="none" stroke="#fff" strokeWidth="1.800">
          <path d="M2.500 9.500A5.500 5.500 0 0 1 11 3.500M13.500 6.500A5.500 5.500 0 0 1 5 12.500" />
          <path d="M9.500 5.500l4-.5-2-3.500zM6.500 10.500l-4 .5 2 3.500z" fill="#fff" stroke="none" />
        </svg>
      </button>
      <div className="ml-2 h-5 w-px bg-[#222]" />
      <button type="button" className="ml-5 flex h-full w-[171px] shrink-0 items-center gap-2 whitespace-nowrap">
        <svg width="15" height="15" className="shrink-0">
          <rect width="15" height="15" rx="2" fill="#ef8a3d" />
          <path d="M3.500 6q0 6 4 6t4.500-5q-1-3-4-3l1.500 2.500L7 8Q4.500 8 3.500 3.500z" fill="#fff" />
        </svg>
        Image trace Tickness ...
      </button>
      <button type="button" className="flex h-full w-[177px] shrink-0 items-center gap-2 bg-[#92b372] pl-1 text-white">
        <DragonLogo size={16} />
        &lt;untitled&gt; *
      </button>
      <button type="button" aria-label="LightBurn" className="ml-[199px]">
        <DragonLogo size={22} />
      </button>
      <div className="ml-auto flex items-center pr-[2px]">
        <div className="flex items-center gap-[7px]">
          <span className="flex size-5 items-center justify-center rounded-[3px] bg-[#344252]">
            <svg width="16" height="16">
              <circle cx="8" cy="6" r="5" fill="#4f7038" strokeDasharray="1 1" stroke="#789a58" />
              <path d="M7 7h2v8H7zM5 8l3 2M11 8l-3 2" fill="#999" stroke="#999" strokeWidth="0.500" />
            </svg>
          </span>
          <span className="flex size-5 items-center justify-center rounded-[3px] bg-[#b5202d]">
            <FaGlobeAmericas size={14} color="#fff" />
          </span>
          <span className="flex size-5 items-center justify-center rounded-[3px] bg-[#4b86cc]">
            <svg width="14" height="12" fill="#f0f0f0" stroke="#888" strokeWidth="0.800">
              <rect x="0.500" y="0.500" width="13" height="11" stroke="none" />
              <path d="M1 1l6 5.500L13 1M1 11l4-5.500M13 11L9 5.500" fill="none" />
            </svg>
          </span>
        </div>
        <svg width="20" height="22" className="ml-[10px]">
          <path d="M10 1q4 2 9 3 0 12-9 17Q1 16 1 4q5-1 9-3z" fill="#ddd" stroke="#aaa" />
          <path d="M5 11l4 5 6.500-10" fill="none" stroke="#5da53a" strokeWidth="3" />
        </svg>
        <FaWifi size={21} className="ml-2" />
        <svg width="22" height="18" className="ml-[5px] text-[9px]">
          <ellipse cx="11" cy="9" rx="10.300" ry="6.500" fill="none" stroke="#ddd" />
          <text x="11" y="12" textAnchor="middle" fill="#ddd" fontWeight="bold">intel</text>
        </svg>
        <svg width="12" height="18" className="ml-2" fill="none" stroke="#ddd" strokeWidth="1.800">
          <path d="M4 11Q1 9 1 6a5 5 0 0 1 10 0q0 3-3 5v1H4zM4 15h4M5 17h2" />
        </svg>
        <svg width="24" height="22" className="ml-5" fill="none" stroke="#ddd" strokeWidth="2">
          <path d="M1 7h4l6-5v18l-6-5H1z" fill="#ddd" stroke="none" />
          <path d="M13.500 7q2 4 0 8M16.500 4.500q4 6.500 0 13M19.500 2q6 9 0 18" />
        </svg>
        <time className="ml-[6px] whitespace-nowrap">sab 30 gen, 11.38</time>
        <button type="button" aria-label="Show desktop" className="ml-[6px] block h-[19px] w-[22px] border-t-4 border-[#6c8c4c] bg-[#8fb266]" />
      </div>
    </footer>
  );
}

export default function App() {
  return (
    <div className="relative flex h-screen flex-col overflow-hidden bg-[#c4c4c4] font-['Noto_Sans',sans-serif] text-[13px] leading-4 text-[#111]">
      <div className="mr-[5px] flex min-h-0 flex-1 flex-col border-l border-[#aaa] bg-[#efefef]">
        <TitleBar />
        <MenuBar />
        <MainToolbar />
        <NumericToolbar />
        <div className="flex min-h-0 flex-1">
          <DrawToolbar />
          <Canvas />
          <aside className="ml-[9px] flex w-[507px] shrink-0 flex-col">
            <ShapeProperties />
            <LaserPanel />
          </aside>
        </div>
      </div>
      <Taskbar />
      <OffsetDialog />
      <svg width="14" height="20" className="pointer-events-none absolute top-[370px] left-[797px]" aria-hidden="true">
        <path d="M1.500 1v15l3.500-3 2.500 6 3-1.500-2.500-5.500h4.500z" fill="#fff" stroke="#111" strokeWidth="1.200" />
      </svg>
    </div>
  );
}
